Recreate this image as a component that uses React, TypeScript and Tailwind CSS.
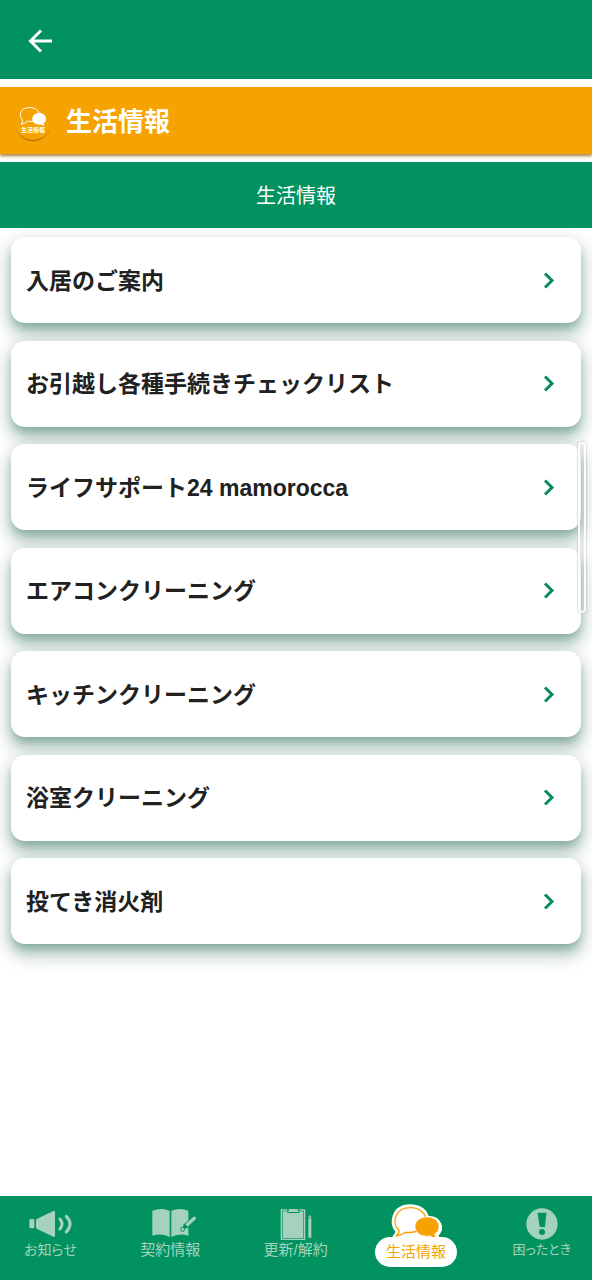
import React from 'react';

interface NavItem {
  id: string;
  label: string;
  icon: React.ReactNode;
  size: string;
  active?: boolean;
}

const menuItems: string[] = [
  '入居のご案内',
  'お引越し各種手続きチェックリスト',
  'ライフサポート24 mamorocca',
  'エアコンクリーニング',
  'キッチンクリーニング',
  '浴室クリーニング',
  '投てき消火剤',
];

const BackIcon: React.FC = () => (
  <svg viewBox="0 0 34 34" className="size-[34px]" fill="none" stroke="currentColor" strokeWidth="3" aria-hidden="true">
    <path d="M29 17 H8 M18 6.5 L7.5 17 L18 27.5" />
  </svg>
);

const ChevronIcon: React.FC = () => (
  <svg viewBox="0 0 33 33" className="size-[33px]" fill="none" stroke="#0a8a5c" strokeWidth="3" aria-hidden="true">
    <path d="M13 9.5 L20 16.5 L13 23.5" />
  </svg>
);

const SpeakerIcon: React.FC = () => (
  <svg viewBox="86 54 132 96" className="h-8 w-11" fill="currentColor" aria-hidden="true">
    <rect x="90" y="87" width="15" height="28" rx="4" />
    <path d="M112 87 L162 63 Q167 61 167 67 V136 Q167 142 162 140 L112 116 Q110 115 110 112 V91 Q110 88 112 87 Z" />
    <path d="M182 87 Q194 101 182 117" fill="none" stroke="currentColor" strokeWidth="9" strokeLinecap="round" />
    <path d="M201 79 Q223 101 201 126" fill="none" stroke="currentColor" strokeWidth="9" strokeLinecap="round" />
  </svg>
);

const BookIcon: React.FC = () => (
  <svg viewBox="432 54 162 96" className="h-8 w-[54px]" fill="currentColor" aria-hidden="true">
    <path d="M460 62 Q486 52 512 62 V141 Q486 129 460 137 Z" />
    <path d="M517 62 Q543 52 568 62 V137 Q543 129 517 141 Z" />
    <path d="M560 108 L587 84" stroke="#029260" strokeWidth="15" strokeLinecap="round" />
    <path d="M564 105 L586 85" stroke="currentColor" strokeWidth="10" strokeLinecap="round" />
    <path d="M555 103 L567 114" stroke="#029260" strokeWidth="4" />
    <circle cx="551" cy="118" r="6" fill="currentColor" stroke="#029260" strokeWidth="3" />
  </svg>
);

const ClipboardIcon: React.FC = () => (
  <svg viewBox="230 54 96 96" className="size-8" fill="currentColor" aria-hidden="true">
    <rect x="232" y="58" width="74" height="92" rx="2" />
    <rect x="237" y="63" width="64" height="82" fill="none" stroke="#029260" strokeWidth="2" />
    <path d="M252 54 H288 V69 H252 Z" fill="#029260" />
    <path d="M257 57 H283 V62 H286 V66 H254 V62 H257 Z" />
    <path d="M315 81 L319 75 L324 81 V143 H315 Z" />
    <path d="M314 84 H325" stroke="#029260" strokeWidth="2" />
  </svg>
);

const ChatIcon: React.FC = () => (
  <svg viewBox="62 38 156 108" className="h-9 w-[52px]" aria-hidden="true">
    <path
      d="M85 121 C65 105 70 49 122 49 C150 49 170 64 172 84 C214 80 221 121 199 134 L203 142 L188 139 H77 Q86 132 85 121 Z"
      fill="#fff"
      stroke="#fff"
      strokeWidth="14"
      strokeLinejoin="round"
    />
    <path
      d="M89 119 C64 98 78 52 123 52 C151 52 169 68 169 88 C169 114 146 129 108 126 Q95 136 80 137 Q90 130 89 119 Z"
      fill="#fff"
      stroke="#f5a202"
      strokeWidth="4"
      strokeLinejoin="round"
    />
    <path
      d="M173 80 C194 80 209 92 209 109 C209 119 204 127 196 131 Q197 138 204 143 Q190 143 182 137 C156 141 137 127 137 109 C137 92 152 80 173 80 Z"
      fill="#f5a202"
      stroke="#fff"
      strokeWidth="2"
    />
  </svg>
);

const AlertIcon: React.FC = () => (
  <svg viewBox="466 54 96 96" className="size-8" aria-hidden="true">
    <circle cx="514" cy="102" r="47" fill="currentColor" />
    <path d="M501 70 Q501 68 503 68 H525 Q527 68 527 70 L523 111 H507 Z" fill="#029260" />
    <circle cx="514" cy="126" r="9" fill="#029260" />
  </svg>
);

const navItems: NavItem[] = [
  { id: 'news', label: 'お知らせ', icon: <SpeakerIcon />, size: 'text-sm leading-5' },
  { id: 'contract', label: '契約情報', icon: <BookIcon />, size: 'text-[15px] leading-5' },
  { id: 'renewal', label: '更新/解約', icon: <ClipboardIcon />, size: 'text-[15px] leading-5' },
  { id: 'life', label: '生活情報', icon: <ChatIcon />, size: 'text-[15px] leading-5', active: true },
  { id: 'trouble', label: '困ったとき', icon: <AlertIcon />, size: 'text-[13px] leading-5' },
];

const LifeBadge: React.FC = () => (
  <div className="flex size-[38px] flex-col items-center rounded-full pt-1 text-white shadow-[0_2px_1px_-1px_#a86c04]">
    <svg viewBox="58 314 86 60" className="h-5 w-7" aria-hidden="true">
      <path
        d="M69 356 C55 343 61 318 90 318 C109 318 120 328 120 340 C119 357 103 363 84 360 Q76 368 64 369 Q70 363 69 356 Z"
        fill="none"
        stroke="currentColor"
        strokeWidth="3"
      />
      <path
        d="M120 335 C132 335 141 343 141 353 C141 360 138 364 133 367 Q134 371 138 373 Q130 374 125 370 C110 372 99 364 99 353 C99 343 108 335 120 335 Z"
        fill="currentColor"
      />
    </svg>
    <span className="text-[6px] leading-[8px] font-bold">生活情報</span>
  </div>
);

const App: React.FC = () => {
  return (
    <div className="relative flex min-h-screen flex-col bg-white font-['Liberation_Sans','Noto_Sans_CJK_JP',sans-serif] text-[#212121]">
      <header className="flex h-[79px] items-center bg-[#029260] px-[23px] pt-[2px] text-white">
        <button type="button" aria-label="戻る">
          <BackIcon />
        </button>
      </header>

      <div className="mt-2 flex h-[67px] items-center gap-[14px] bg-[#f5a202] px-[14px] text-white shadow-[0_2px_3px_#a87c38]">
        <LifeBadge />
        <h1 className="pt-[3px] text-[26px] leading-9 font-bold">生活情報</h1>
      </div>

      <h2 className="mt-2 flex h-[66px] items-center justify-center bg-[#029260] pt-[2px] text-xl text-white">
        生活情報
      </h2>

      <main className="px-[11px] pt-[9px] pb-10">
        {/* Menu cards */}
        <ul className="flex min-h-[707px] flex-col justify-between">
          {menuItems.map((item) => (
            <li key={item}>
              <a
                href="#"
                className="relative flex h-[86px] items-center justify-between rounded-[14px] bg-white pr-4 pl-[15px] shadow-[0_7px_8px_-2px_rgba(0,80,50,0.26),0_11px_17px_2px_rgba(0,80,50,0.22),0_4px_18px_2px_rgba(0,80,50,0.12)]"
              >
                <span className="pt-px text-[23px] leading-8 font-bold">{item}</span>
                <ChevronIcon />
              </a>
            </li>
          ))}
        </ul>
      </main>

      {/* Scroll indicator over the list */}
      <div className="absolute top-[442px] right-[6px] h-[171px] w-2 rounded-full border-2 border-white/90 bg-gray-500/10 shadow-[0_0_2px_#999]"></div>

      <nav className="mt-auto flex h-[84px] items-start justify-between bg-[#029260] pr-[21px] pl-6 pt-3 text-[#a5d2be] [font-feature-settings:'palt']">
        {navItems.map((item) =>
          item.active ? (
            <a key={item.id} href="#" aria-current="page" className="-mt-[5px] -mr-2 -ml-4 flex flex-col items-center">
              {item.icon}
              <span className={`-mt-[2px] rounded-full bg-white px-[11px] py-[5px] text-[#f5a202] ${item.size}`}>
                {item.label}
              </span>
            </a>
          ) : (
            <a key={item.id} href="#" className="flex flex-col items-center">
              {item.icon}
              <span className={item.size}>{item.label}</span>
            </a>
          )
        )}
      </nav>
    </div>
  );
};

export default App;
